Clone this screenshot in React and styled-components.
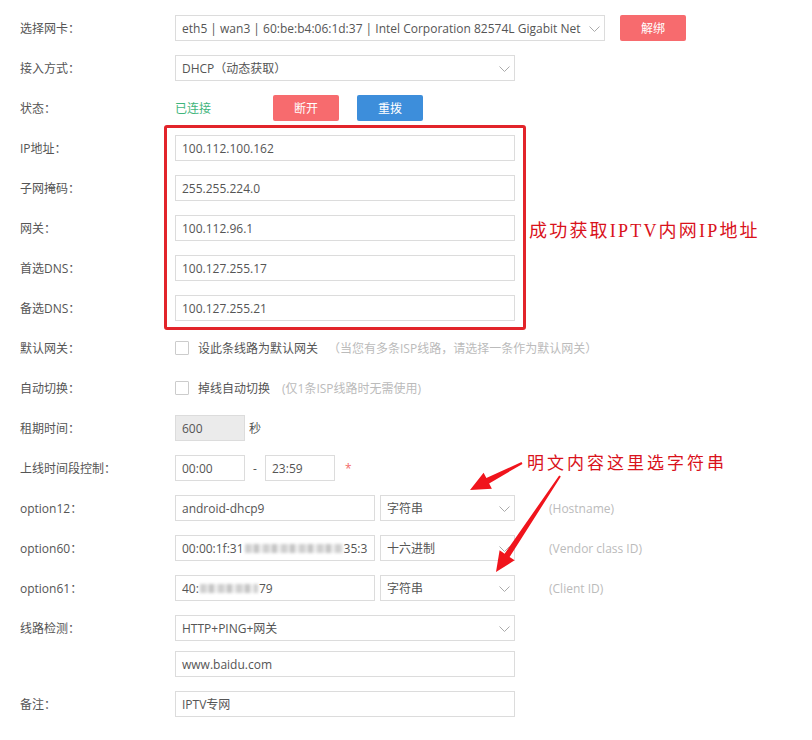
import React from 'react';
import styled, { createGlobalStyle } from 'styled-components';

const Global = createGlobalStyle`
  body {
    margin: 0;
    background: #fff;
  }
`;

const Page = styled.div`
  position: relative;
  width: 812px;
  height: 740px;
  box-sizing: border-box;
  padding: 8px 0 0 20px;
  font-family: "Open Sans", "Noto Sans CJK SC", sans-serif;
  font-size: 12px;
  color: #555;
  overflow: hidden;
  `;

const Row = styled.div`
  display: flex;
  align-items: center;
  height: 40px;
  `;

const SubRow = styled.div`
  display: flex;
  align-items: flex-start;
  height: 36px;
  padding: 3px 0 0 155px;
  box-sizing: border-box;
  `;

const Label = styled.div`
  width: 155px;
  flex: none;
  color: #555;
  `;

const Box = styled.div`
  width: ${({$w}) => $w}px;
  height: 26px;
  flex: none;
  box-sizing: border-box;
  border: 1px solid #dcdcdc;
  background: ${({$gray}) => $gray ? '#ebebeb' : '#fff'};
  padding: 0 6px;
  display: flex;
  align-items: center;
  white-space: nowrap;
  overflow: hidden;
  color: #555;
  `;

const SelectBox = styled(Box)`
  position: relative;
  padding-right: ${({$pr}) => $pr || 20}px;
  `;

const SelectText = styled.span`
  overflow: hidden;
  white-space: nowrap;
  flex: 1;
  `;

const Chevron = styled.svg`
  position: absolute;
  right: 4px;
  top: 10px;
  `;

const Button = styled.div`
  width: 66px;
  height: 26px;
  border-radius: 2px;
  background: ${({$blue}) => $blue ? '#3d8edb' : '#f76b6e'};
  color: #fff;
  display: flex;
  align-items: center;
  justify-content: center;
  margin-left: ${({$ml}) => $ml || 0}px;
  flex: none;
  `;

const Status = styled.span`
  width: 98px;
  color: #3fb57c;
  `;

const Check = styled.span`
  width: 14px;
  height: 14px;
  box-sizing: border-box;
  border: 1px solid #ccc;
  border-radius: 1px;
  margin-right: 9px;
  flex: none;
  `;

const CheckText = styled.span`
  color: #555;
  `;

const Hint = styled.span`
  color: #bbb;
  margin-left: ${({$ml}) => $ml || 0}px;
  `;

const Dash = styled.span`
  width: 20px;
  text-align: center;
  `;

const Star = styled.span`
  color: #f36a6a;
  margin-left: 10px;
  `;

const Blur = styled.span`
  display: inline-block;
  width: ${({$w}) => $w}px;
  height: 9px;
  margin: 0 1px;
  background: repeating-linear-gradient(90deg, #cfcfcf 0 6px, #e8e8e8 6px 9px, #c4c4c4 9px 14px, #efefef 14px 18px);
  filter: blur(1.6px);
  flex: none;
  `;

const Field = styled.div`
  display: flex;
  align-items: center;
  `;

const Gap = styled.span`
  width: ${({$w}) => $w}px;
  flex: none;
  `;

const RedBox = styled.div`
  position: absolute;
  left: 164px;
  top: 125px;
  width: 362px;
  height: 205px;
  box-sizing: border-box;
  border: 3px solid #e2242a;
  border-radius: 3px;
  pointer-events: none;
  `;

const Note = styled.div`
  position: absolute;
  left: ${({$x}) => $x}px;
  top: ${({$y}) => $y}px;
  color: #d9121b;
  font-family: "Liberation Serif", "Noto Sans CJK SC", serif;
  font-size: ${({$size}) => $size}px;
  letter-spacing: ${({$ls}) => $ls || 0}px;
  white-space: nowrap;
  `;

const Overlay = styled.svg`
  position: absolute;
  left: 0;
  top: 0;
  pointer-events: none;
  `;

const Down = () => (
  <Chevron width="11" height="6" viewBox="0 0 11 6">
    <path d="M0.5 0.5 L5.5 5.5 L10.5 0.5" fill="none" stroke="#aaa" strokeWidth="1" />
  </Chevron>
);

const Select = ({w, children}) => (
  <SelectBox $w={w}>
    <SelectText>{children}</SelectText>
    <Down />
  </SelectBox>
);

// tapered arrow from tail to tip
const arrowPoints = (x1, y1, x2, y2) => {
  const dx = x2 - x1, dy = y2 - y1;
  const len = Math.hypot(dx, dy);
  const ux = dx / len, uy = dy / len;
  const nx = -uy, ny = ux;
  const headLen = 20, headW = 9, shaftW = 3, tailW = 1;
  const bx = x2 - ux * headLen, by = y2 - uy * headLen;
  const pts = [
    [x1 + nx * tailW, y1 + ny * tailW],
    [bx + nx * shaftW, by + ny * shaftW],
    [bx + nx * headW, by + ny * headW],
    [x2, y2],
    [bx - nx * headW, by - ny * headW],
    [bx - nx * shaftW, by - ny * shaftW],
    [x1 - nx * tailW, y1 - ny * tailW],
  ];
  return pts.map(p => p.join(',')).join(' ');
};

const App = () => {
  return (
    <Page>
      <Global />
      <Row>
        <Label>选择网卡：</Label>
        <SelectBox $w={430} $pr={22}>
          <SelectText>eth5 | wan3 | 60:be:b4:06:1d:37 | Intel Corporation 82574L Gigabit Net</SelectText>
          <Down />
        </SelectBox>
        <Button $ml={15}>解绑</Button>
      </Row>
      <Row>
        <Label>接入方式：</Label>
        <Select w={340}>DHCP（动态获取）</Select>
      </Row>
      <Row>
        <Label>状态：</Label>
        <Status>已连接</Status>
        <Button>断开</Button>
        <Button $blue $ml={18}>重拨</Button>
      </Row>
      <Row>
        <Label>IP地址：</Label>
        <Box $w={340}>100.112.100.162</Box>
      </Row>
      <Row>
        <Label>子网掩码：</Label>
        <Box $w={340}>255.255.224.0</Box>
      </Row>
      <Row>
        <Label>网关：</Label>
        <Box $w={340}>100.112.96.1</Box>
      </Row>
      <Row>
        <Label>首选DNS：</Label>
        <Box $w={340}>100.127.255.17</Box>
      </Row>
      <Row>
        <Label>备选DNS：</Label>
        <Box $w={340}>100.127.255.21</Box>
      </Row>
      <Row>
        <Label>默认网关：</Label>
        <Check />
        <CheckText>设此条线路为默认网关</CheckText>
        <Hint $ml={10}>（当您有多条ISP线路，请选择一条作为默认网关）</Hint>
      </Row>
      <Row>
        <Label>自动切换：</Label>
        <Check />
        <CheckText>掉线自动切换</CheckText>
        <Hint $ml={12}>(仅1条ISP线路时无需使用)</Hint>
      </Row>
      <Row>
        <Label>租期时间：</Label>
        <Box $w={70} $gray>600</Box>
        <Gap $w={4} />
        <span>秒</span>
      </Row>
      <Row>
        <Label>上线时间段控制：</Label>
        <Box $w={70}>00:00</Box>
        <Dash>-</Dash>
        <Box $w={70}>23:59</Box>
        <Star>*</Star>
      </Row>
      <Row>
        <Label>option12：</Label>
        <Field>
          <Box $w={200}>android-dhcp9</Box>
          <Gap $w={5} />
          <Select w={135}>字符串</Select>
          <Hint $ml={34}>(Hostname)</Hint>
        </Field>
      </Row>
      <Row>
        <Label>option60：</Label>
        <Field>
          <Box $w={200}>00:00:1f:31<Blur $w={98} />35:3</Box>
          <Gap $w={5} />
          <Select w={135}>十六进制</Select>
          <Hint $ml={34}>(Vendor class ID)</Hint>
        </Field>
      </Row>
      <Row>
        <Label>option61：</Label>
        <Field>
          <Box $w={200}>40:<Blur $w={58} />79</Box>
          <Gap $w={5} />
          <Select w={135}>字符串</Select>
          <Hint $ml={34}>(Client ID)</Hint>
        </Field>
      </Row>
      <Row>
        <Label>线路检测：</Label>
        <Select w={340}>HTTP+PING+网关</Select>
      </Row>
      <SubRow>
        <Box $w={340}>www.baidu.com</Box>
      </SubRow>
      <Row>
        <Label>备注：</Label>
        <Box $w={340}>IPTV专网</Box>
      </Row>

      <RedBox />
      <Note $x={529} $y={216} $size={18} $ls={2.2}>成功获取IPTV内网IP地址</Note>
      <Note $x={527} $y={449} $size={17} $ls={3}>明文内容这里选字符串</Note>
      <Overlay width="812" height="740">
        <polygon points={arrowPoints(522, 463, 470, 490)} fill="#f0141c" />
        <polygon points={arrowPoints(560, 476, 496, 572)} fill="#f0141c" />
      </Overlay>
    </Page>
  );
};

export default App;
